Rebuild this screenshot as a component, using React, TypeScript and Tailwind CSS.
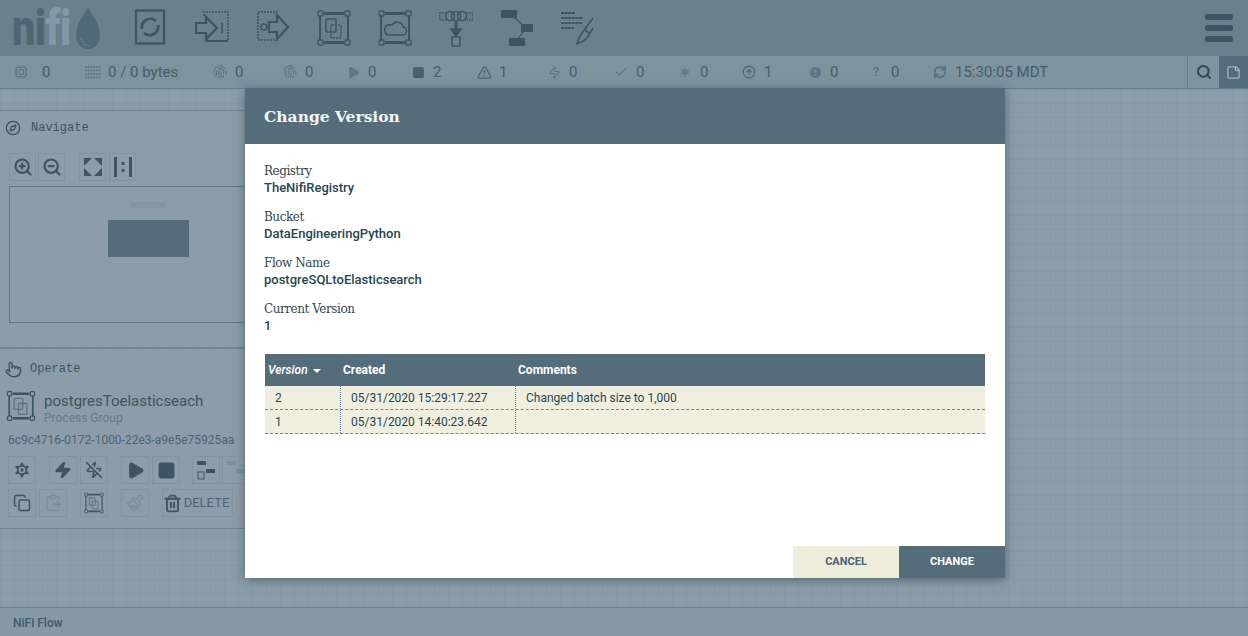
import React from "react";
import { Compass, Pointer, ZoomIn, ZoomOut, Play, Square, Settings, Zap, ZapOff, Copy, ClipboardPaste, Paintbrush, Trash2, Search, StickyNote, RefreshCw, TriangleAlert, Check, Asterisk, CircleArrowUp, CircleAlert, Fingerprint, Cpu } from "lucide-react";

const ink = "#3e5561";

function Corners() {
  return (
    <>
      <path d="M3 7V31M31 7V31" fill="none" stroke={ink} strokeWidth="2" />
      <path d="M7 4.500h20M7 33.500h20" stroke={ink} strokeWidth="3" />
      {[[1, 2], [28, 2], [1, 31], [28, 31]].map(([x, y]) => (
        <rect key={`${x}-${y}`} x={x} y={y} width="5" height="5" rx="1" fill="none" stroke={ink} strokeWidth="1.4" />
      ))}
    </>
  );
}

function ToolIcon({ kind }: { kind: string }) {
  return (
    <svg width="34" height="38" viewBox="0 0 34 38" fill="none" stroke={ink} strokeWidth="1.6">
      {kind === "processor" && (
        <>
          <rect x="2" y="1.500" width="28" height="33" strokeWidth="2.2" />
          <path d="M8 20a8.500 8.500 0 0 1 14-8M24 16a8.500 8.500 0 0 1-14 8" strokeWidth="2.8" />
        </>
      )}
      {kind === "input" && (
        <>
          <path d="M9 7V3h24v29H12v-3" strokeDasharray="2 1" />
          <path d="M11 32h22" strokeWidth="2" />
          <path d="M1 14h10V8l11 11-11 11v-6H1z" strokeWidth="2.200" />
          <path d="M27 14v10" />
        </>
      )}
      {kind === "output" && (
        <>
          <path d="M22 3H2v28h20" strokeDasharray="2 1" />
          <circle cx="8" cy="18" r="3" />
          <path d="M13 13h8V6l11 12-11 12v-7h-8z" strokeWidth="2.200" />
        </>
      )}
      {kind === "group" && (
        <>
          <Corners />
          <rect x="9" y="10" width="10" height="13" rx="1" />
          <rect x="14" y="16" width="10" height="13" rx="1" strokeDasharray="2 1" />
        </>
      )}
      {kind === "remote" && (
        <>
          <Corners />
          <path d="M10 26h14a4 4 0 0 0 1-8 6 6 0 0 0-11-2 5 5 0 0 0-4 10z" />
        </>
      )}
      {kind === "funnel" && (
        <>
          <circle cx="11" cy="7" r="4.500" />
          <circle cx="17" cy="7" r="4.500" />
          <circle cx="23" cy="7" r="4.500" />
          <rect x="0.800" y="4" width="6" height="7" strokeDasharray="1.500 1" />
          <rect x="27.500" y="4" width="6" height="7" strokeDasharray="1.500 1" />
          <path d="M17 12v11" strokeWidth="3" />
          <path d="M12 20h10l-5 7z" fill={ink} />
          <rect x="13" y="28" width="8" height="9" rx="1" />
        </>
      )}
      {kind === "template" && (
        <>
          <path d="M12 6l14 13-9 12" strokeWidth="1.200" />
          <rect x="1" y="1" width="16" height="8" rx="1" fill={ink} stroke="none" />
          <rect x="21" y="15" width="12" height="8" rx="1" fill={ink} stroke="none" />
          <rect x="9" y="29" width="16" height="8" rx="1" fill={ink} stroke="none" />
        </>
      )}
      {kind === "label" && (
        <>
          <path d="M0 4h14M0 9h22M0 14h22M0 19h13" strokeWidth="2" strokeDasharray="3 0.600" />
          <path d="M32 9L21 24c-3 4-4 7-5 11 3-1 7-3 10-6l6-10M24 21l4 3" />
        </>
      )}
    </svg>
  );
}

function Logo() {
  return (
    <div className="flex items-center w-[90px] h-[44px]">
      <div className="w-[63px] h-[44px] overflow-visible">
        <div className="origin-left scale-x-[0.82] text-[50px] leading-[44px] font-black tracking-[-0.5px] whitespace-nowrap">
          <span className="text-[#4f6773]">ni</span>
          <span className="text-[#8298a3]">fi</span>
        </div>
      </div>
      <svg width="26" height="42" viewBox="0 0 26 42" className="shrink-0">
        <path d="M13 0C10 8 1 16 1 28c0 8 5 14 12 14s12-6 12-14C25 16 16 8 13 0z" fill="#506976" />
        <path d="M6 30c1 6 5 9 8 9" stroke="#7d939e" strokeWidth="1.500" fill="none" strokeDasharray="1 1" />
      </svg>
    </div>
  );
}

function Stat({ width, icon, text, gap = "gap-[4px]" }: { width: string; icon: React.ReactNode; text: string; gap?: string }) {
  return (
    <div className={`flex items-center shrink-0 ${gap} ${width}`}>
      <span className="w-[22px] flex justify-center text-[#5f7783]">{icon}</span>
      <span className="text-[15px] text-[#455c68] whitespace-nowrap">{text}</span>
    </div>
  );
}

function TB({ children, w = "w-[28px]", ml = "", faint = false }: { children: React.ReactNode; w?: string; ml?: string; faint?: boolean }) {
  return (
    <div className={`h-[28px] ${w} ${ml} shrink-0 flex items-center justify-center border border-[#7f95a0] ${faint ? "text-[#78909b]" : "text-[#3e5561]"}`}>
      {children}
    </div>
  );
}

function InfoField({ label, value }: { label: string; value: string }) {
  return (
    <div className="h-[46px]">
      <div className="text-[12px] leading-[17px] text-[#33474f] [font-family:'DejaVu_Serif',serif] tracking-[-0.45px] -ml-[1px]">{label}</div>
      <div className="text-[13px] leading-[16px] font-medium text-[#264653] -ml-[1px]">{value}</div>
    </div>
  );
}

function GroupIcon({ size = 32 }: { size?: number }) {
  return (
    <svg width={size} height={size} viewBox="0 0 34 38" fill="none" stroke="#5b7480" strokeWidth="1.600">
      <Corners />
      <rect x="9" y="10" width="10" height="13" rx="1" />
      <rect x="14" y="16" width="10" height="13" rx="1" />
    </svg>
  );
}

const ROWS = [
  ["2", "05/31/2020 15:29:17.227", "Changed batch size to 1,000"],
  ["1", "05/31/2020 14:40:23.642", ""],
];

export default function App() {
  return (
    <div className="relative w-[1248px] h-[636px] overflow-hidden flex flex-col bg-[#8a9ea9] [font-family:Roboto,sans-serif]">
      <header className="h-[56px] shrink-0 bg-[#6a808b] flex items-center pl-[12px] pr-[15px]">
        <Logo />
        <div className="flex items-center gap-[27px] ml-[32px]">
          {["processor", "input", "output", "group", "remote", "funnel", "template", "label"].map((k) => (
            <ToolIcon key={k} kind={k} />
          ))}
        </div>
        <div className="ml-auto flex flex-col gap-[5px] w-[28px]">
          <span className="h-[6px] rounded-[2px] bg-[#3e5561]" />
          <span className="h-[6px] rounded-[2px] bg-[#3e5561]" />
          <span className="h-[6px] rounded-[2px] bg-[#3e5561]" />
        </div>
      </header>

      <div className="h-[33px] shrink-0 bg-[#7d939e] flex items-center pl-[10px] border-b border-[#6a808b]">
        <Stat width="w-[72px]" gap="gap-[10px]" icon={<Cpu size={14} />} text="0" />
        <Stat width="w-[127px]" icon={
          <svg width="16" height="14" viewBox="0 0 16 14" stroke="#5f7783" strokeWidth="1.500" strokeDasharray="2 0.700"><path d="M0 2h16M0 5.500h16M0 9h16M0 12.500h16" /></svg>
        } text="0 / 0 bytes" />
        <Stat width="w-[70px]" icon={<Fingerprint size={14} />} text="0" />
        <Stat width="w-[63px]" icon={<Fingerprint size={14} />} text="0" />
        <Stat width="w-[65px]" icon={<Play size={13} fill="#5f7783" />} text="0" />
        <Stat width="w-[66px]" icon={<Square size={13} fill="#4a626e" className="text-[#4a626e]" />} text="2" />
        <Stat width="w-[70px]" icon={<TriangleAlert size={15} className="text-[#4a626e]" />} text="1" />
        <Stat width="w-[67px]" icon={<Zap size={13} />} text="0" />
        <Stat width="w-[64px]" icon={<Check size={14} />} text="0" />
        <Stat width="w-[64px]" icon={<Asterisk size={14} strokeWidth={3} />} text="0" />
        <Stat width="w-[66px]" icon={<CircleArrowUp size={14} className="text-[#4a626e]" />} text="1" />
        <Stat width="w-[61px]" icon={<CircleAlert size={15} fill="#5f7783" stroke="#7d939e" />} text="0" />
        <Stat width="w-[68px]" icon={<span className="text-[13px] font-bold">?</span>} text="0" />
        <div className="flex items-center gap-[8px] shrink-0">
          <RefreshCw size={14} strokeWidth={3} className="text-[#54707d]" />
          <span className="text-[15px] text-[#455c68] whitespace-nowrap">15:30:05 MDT</span>
        </div>
        <div className="ml-auto flex h-full">
          <div className="w-[32px] h-full border-l border-[#6a808b] flex items-center justify-center text-[#2f4854]">
            <Search size={16} strokeWidth={3} />
          </div>
          <div className="w-[29px] h-full bg-[#556d7b] flex items-center justify-center text-[#a5b5bd]">
            <StickyNote size={15} />
          </div>
        </div>
      </div>

      <main className="flex-1 min-h-0 pt-[21px] bg-[linear-gradient(#7d929d66_1px,transparent_1px),linear-gradient(90deg,#7d929d66_1px,transparent_1px)] bg-[size:14px_14px]">
        <section className="w-[255px] h-[239px] bg-[#8a9da8] border-t border-b-2 border-[#6f8591] flex flex-col">
          <div className="flex items-center gap-[10px] pl-[5px] h-[34px] text-[#3e5561]">
            <Compass size={16} />
            <span className="text-[12px] [font-family:'Liberation_Mono',monospace]">Navigate</span>
          </div>
          <div className="flex pl-[9px] mt-[8px]">
            <TB w="w-[27px]"><ZoomIn size={20} strokeWidth={2.6} /></TB>
            <TB w="w-[27px]" ml="ml-[2px]"><ZoomOut size={20} strokeWidth={2.6} /></TB>
            <TB w="w-[27px]" ml="ml-[14px]">
              <svg width="20" height="20" viewBox="0 0 20 20" fill="#3e5561"><path d="M1 1h8L1 9zM19 1v8L11 1zM1 19v-8l8 8zM19 19h-8l8-8z" /></svg>
            </TB>
            <TB w="w-[27px]" ml="ml-[3px]">
              <svg width="20" height="20" viewBox="0 0 20 20" fill="#3e5561"><rect x="1" y="0" width="3" height="20" /><rect x="16" y="0" width="3" height="20" /><rect x="8.500" y="5" width="3" height="3" /><rect x="8.500" y="12" width="3" height="3" /></svg>
            </TB>
          </div>
          <div className="mt-[5px] ml-[9px] h-[137px] border border-[#5f7a87] flex flex-col items-start pl-[98px]">
            <span className="mt-[15px] h-[6px] w-[34px] ml-[23px] bg-[#82979f]" />
            <span className="mt-[12px] w-[81px] h-[37px] bg-[#556d7b]" />
          </div>
        </section>

        <section className="w-[255px] h-[178px] mt-[2px] bg-[#8a9da8] border-b border-[#6f8591] flex flex-col">
          <div className="flex items-center gap-[8px] pl-[5px] h-[36px] text-[#3e5561]">
            <Pointer size={17} />
            <span className="text-[12px] [font-family:'Liberation_Mono',monospace]">Operate</span>
          </div>
          <div className="flex items-start pl-[5px] mt-[3px] gap-[7px]">
            <GroupIcon />
            <div className="pt-[3px]">
              <div className="text-[15px] leading-[17px] text-[#3e5561] whitespace-nowrap">postgresToelasticseach</div>
              <div className="text-[12px] leading-[16px] text-[#647b87]">Process Group</div>
            </div>
          </div>
          <div className="pl-[8px] mt-[6px] text-[12px] leading-[16px] text-[#4d6470] whitespace-nowrap">6c9c4716-0172-1000-22e3-a9e5e75925aa</div>
          <div className="flex pl-[8px] mt-[8px]">
            <TB><Settings size={20} fill="#3e5561" stroke="#8a9da8" /></TB>
            <TB ml="ml-[13px]"><Zap size={18} fill="#3e5561" /></TB>
            <TB ml="ml-[3px]"><ZapOff size={18} /></TB>
            <TB ml="ml-[13px]"><Play size={19} fill="#3e5561" /></TB>
            <TB ml="ml-[3px]"><Square size={19} fill="#3e5561" /></TB>
            <TB ml="ml-[12px]">
              <svg width="20" height="20" viewBox="0 0 20 20" fill="#3e5561"><rect x="1" y="1" width="9" height="4" /><rect x="10" y="9" width="9" height="4" /><rect x="2" y="12" width="6" height="7" fill="none" stroke="#3e5561" /></svg>
            </TB>
            <TB ml="ml-[2px]" faint>
              <svg width="20" height="20" viewBox="0 0 20 20" fill="#7890a0"><rect x="1" y="1" width="9" height="4" /><rect x="10" y="9" width="9" height="4" /></svg>
            </TB>
          </div>
          <div className="flex pl-[8px] mt-[5px]">
            <TB><Copy size={18} /></TB>
            <TB ml="ml-[3px]" faint><ClipboardPaste size={18} /></TB>
            <TB ml="ml-[13px]"><GroupIcon size={22} /></TB>
            <TB ml="ml-[13px]" faint><Paintbrush size={18} /></TB>
            <TB ml="ml-[13px]" w="w-[71px]">
              <div className="flex items-center gap-[2px] -ml-[3px]">
                <Trash2 size={19} strokeWidth={2.4} />
                <span className="text-[13px] text-[#4d6470]">DELETE</span>
              </div>
            </TB>
          </div>
        </section>
      </main>

      <footer className="h-[29px] shrink-0 bg-[#8699a4] border-t border-[#6b818c] flex items-center pl-[13px] pt-[2px]">
        <span className="text-[12px] font-medium text-[#3f5a68]">NiFi Flow</span>
      </footer>

      <div className="absolute left-[245px] top-[88px] w-[760px] h-[490px] bg-white flex flex-col shadow-[0_2px_10px_rgba(40,60,70,0.55)]">
        <div className="h-[56px] shrink-0 bg-[#556d7b] flex items-center pl-[19px] pt-[1px]">
          <h2 className="text-[15.500px] font-bold text-[#f3f5f6] [font-family:'DejaVu_Serif',serif]">Change Version</h2>
        </div>
        <div className="flex-1 min-h-0 px-[20px] pt-[19px]">
          <InfoField label="Registry" value="TheNifiRegistry" />
          <InfoField label="Bucket" value="DataEngineeringPython" />
          <InfoField label="Flow Name" value="postgreSQLtoElasticsearch" />
          <InfoField label="Current Version" value="1" />
          <div className="mt-[7px]">
            <div className="h-[32px] bg-[#556d7b] flex items-center text-[12px] font-bold text-white">
              <div className="w-[75px] pl-[3px] flex items-center gap-[5px] italic font-medium">
                Version
                <span className="w-0 h-0 border-x-[4px] border-x-transparent border-t-[4px] border-t-white mt-[2px]" />
              </div>
              <div className="w-[175px] pl-[3px]">Created</div>
              <div className="pl-[3px]">Comments</div>
            </div>
            {ROWS.map((r) => (
              <div key={r[0]} className="h-[24px] bg-[#f0efdf] border-b border-dashed border-[#6f8591] flex items-center text-[12px] text-[#264653]">
                <div className="w-[76px] h-full pl-[10px] flex items-center border-r border-dotted border-[#6f8591]">{r[0]}</div>
                <div className="w-[175px] h-full pl-[10px] flex items-center border-r border-dotted border-[#6f8591]">{r[1]}</div>
                <div className="pl-[10px]">{r[2]}</div>
              </div>
            ))}
          </div>
        </div>
        <div className="h-[32px] shrink-0 flex justify-end">
          <button className="w-[106px] h-full bg-[#eeecda] text-[11px] font-bold text-[#4a6371]">CANCEL</button>
          <button className="w-[106px] h-full bg-[#556d7b] text-[11px] font-bold text-white">CHANGE</button>
        </div>
      </div>
    </div>
  );
}
